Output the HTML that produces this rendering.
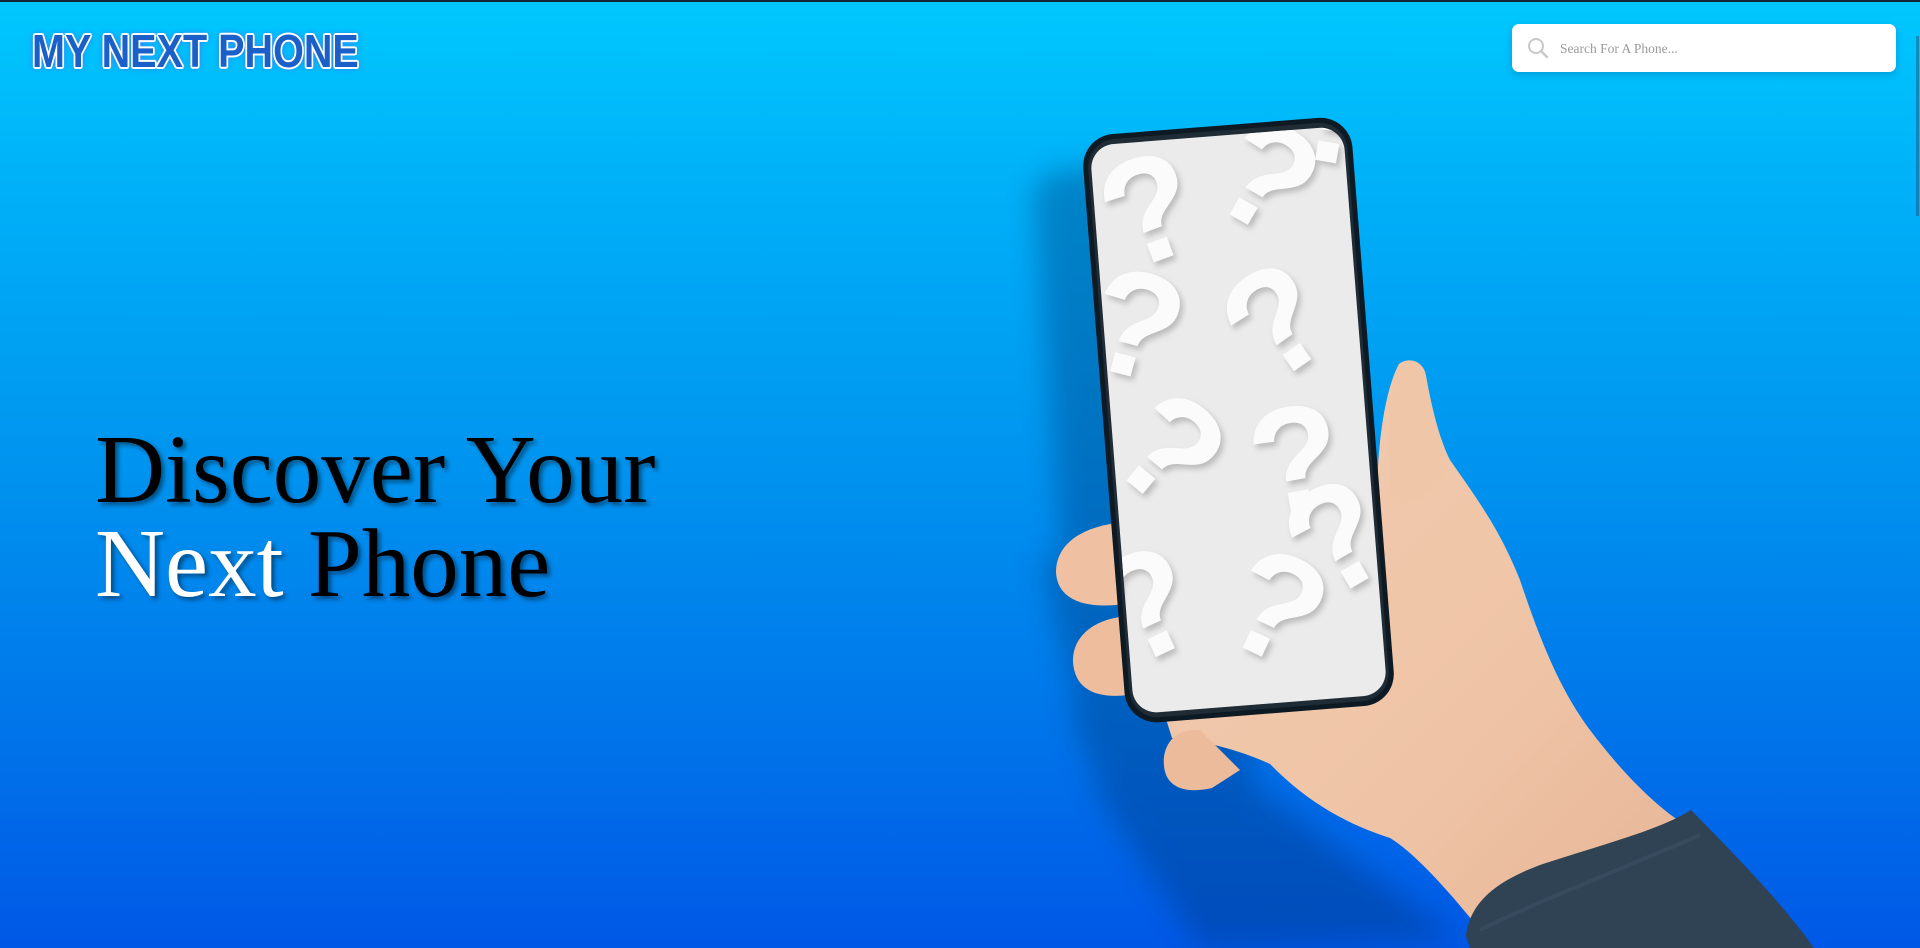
<!DOCTYPE html>
<html><head><meta charset="utf-8">
<style>
html,body{margin:0;padding:0;}
body{width:1920px;height:948px;overflow:hidden;position:relative;
background:linear-gradient(180deg,#00c8fe 0%,#00b0f8 20%,#0098f0 45%,#0078ea 74%,#0058e6 100%);
font-family:"Liberation Serif",serif;}
.topline{position:absolute;left:0;top:0;width:1920px;height:2px;background:#10283a;}
.logo{position:absolute;left:32px;top:24px;font-family:"Liberation Sans",sans-serif;font-weight:bold;font-size:46px;color:#1b5fc9;
transform:scaleX(0.86);transform-origin:left top;
text-shadow:2px 0 0 #fff,-2px 0 0 #fff,0 2px 0 #fff,0 -2px 0 #fff,1.5px 1.5px 0 #fff,-1.5px -1.5px 0 #fff,1.5px -1.5px 0 #fff,-1.5px 1.5px 0 #fff,0 0 6px #3a7cf0,0 0 8px #3a7cf0;}
.search{position:absolute;left:1512px;top:24px;width:384px;height:48px;background:#fff;border-radius:7px;box-shadow:0 3px 8px rgba(0,60,120,.25);}
.search span{position:absolute;left:48px;top:17px;font-size:13.5px;color:#9a9a9a;font-family:"Liberation Serif",serif;}
.search svg{position:absolute;left:14px;top:12px;}
h1{position:absolute;left:95px;top:423px;margin:0;font-weight:normal;font-size:97px;line-height:94px;font-family:"Liberation Serif",serif;color:#000;text-shadow:3px 3px 4px rgba(0,0,0,.45);}
h1 .w{color:#fff;}
.scroll{position:absolute;right:1px;top:36px;width:3px;height:180px;background:rgba(40,60,90,.4);}
</style></head><body>
<div class="topline"></div>
<div class="logo">MY NEXT PHONE</div>
<div class="search">
<svg width="24" height="24" viewBox="0 0 24 24"><circle cx="10" cy="10" r="7" fill="none" stroke="#c9c9c9" stroke-width="2"/><line x1="15" y1="15" x2="21" y2="21" stroke="#c9c9c9" stroke-width="2.5" stroke-linecap="round"/></svg>
<span>Search For A Phone...</span></div>
<h1>Discover Your<br><span class="w">Next</span> Phone</h1>
<div class="scroll"></div>
<svg style="position:absolute;left:0;top:0" width="1920" height="948" viewBox="0 0 1920 948">
<defs>
<filter id="blur" x="-30%" y="-30%" width="160%" height="160%"><feGaussianBlur stdDeviation="14"/></filter>
<linearGradient id="skin" x1="0" y1="0" x2="1" y2="1"><stop offset="0" stop-color="#f2cbb0"/><stop offset="0.6" stop-color="#efc4a6"/><stop offset="1" stop-color="#e6b395"/></linearGradient>
<clipPath id="scr"><rect x="1112" y="134" width="254" height="570" rx="24" transform="rotate(-4.5 1252 426)"/></clipPath>
</defs>
<g filter="url(#blur)" opacity="0.35">
<rect x="1052" y="156" width="270" height="590" rx="30" fill="#003070" transform="rotate(-4.5 1252 426)"/>
<path d="M1040 560 L1150 540 L1260 790 L1460 940 L1200 948 L1100 800 Z" fill="#003070"/>
</g>
<path d="M1399 364 C1410 356 1424 362 1426 376 C1432 410 1440 440 1450 460 C1478 500 1500 530 1520 580 C1540 640 1560 690 1590 730 C1620 770 1650 800 1675 818 L1720 850 L1480 930 C1440 880 1410 850 1390 838 C1350 825 1310 805 1270 764 C1240 750 1200 740 1172 738 L1160 700 L1380 600 L1377 493 C1378 440 1385 390 1399 364 Z" fill="url(#skin)"/>
<path d="M1125 522 C1080 526 1056 545 1056 572 C1057 598 1082 610 1125 604 Z" fill="#efc0a2"/>
<path d="M1130 616 C1092 618 1072 638 1073 662 C1075 692 1100 700 1135 694 Z" fill="#edbd9e"/>
<path d="M1200 730 C1172 728 1162 748 1164 766 C1166 788 1186 794 1212 788 L1240 770 Z" fill="#ecbb9c"/>
<g transform="rotate(-4.5 1252 426)">
<rect x="1104" y="124" width="270" height="590" rx="32" fill="#0d1a24"/>
<rect x="1109" y="129" width="260" height="580" rx="28" fill="#1f2b35"/>
</g>
<g clip-path="url(#scr)">
<rect x="1090" y="100" width="300" height="640" fill="#ebebeb"/>
<g font-family="Liberation Sans,sans-serif" font-weight="bold" font-size="150" fill="#fbfbfb" style="filter:drop-shadow(3px 4px 3px rgba(0,0,0,.2))">
<text x="1100" y="260" transform="rotate(-20 1150 200)">?</text>
<text x="1220" y="230" transform="rotate(30 1270 180)">?</text>
<text x="1090" y="380" transform="rotate(15 1150 330)">?</text>
<text x="1230" y="370" transform="rotate(-35 1280 320)">?</text>
<text x="1120" y="510" transform="rotate(40 1180 460)">?</text>
<text x="1250" y="510" transform="rotate(-10 1300 460)">?</text>
<text x="1100" y="650" transform="rotate(-25 1160 600)">?</text>
<text x="1230" y="660" transform="rotate(25 1280 610)">?</text>
<text x="1290" y="160" transform="rotate(10 1320 120)">?</text>
<text x="1300" y="600" transform="rotate(-30 1320 560)">?</text>
</g>
</g>
<path d="M1399 364 C1410 356 1424 362 1426 376 C1432 410 1440 440 1450 470 C1430 500 1400 510 1392 500 C1386 450 1388 390 1399 364 Z" fill="#f0c6a8"/>
<path d="M1466 936 C1470 900 1500 880 1540 865 C1600 845 1660 830 1691 810 C1730 850 1780 900 1814 948 L1470 948 Z" fill="#2f4354"/>
<path d="M1480 930 C1540 900 1620 870 1700 835" fill="none" stroke="#3c5264" stroke-width="4" opacity=".6"/>
</svg>
</body></html>
